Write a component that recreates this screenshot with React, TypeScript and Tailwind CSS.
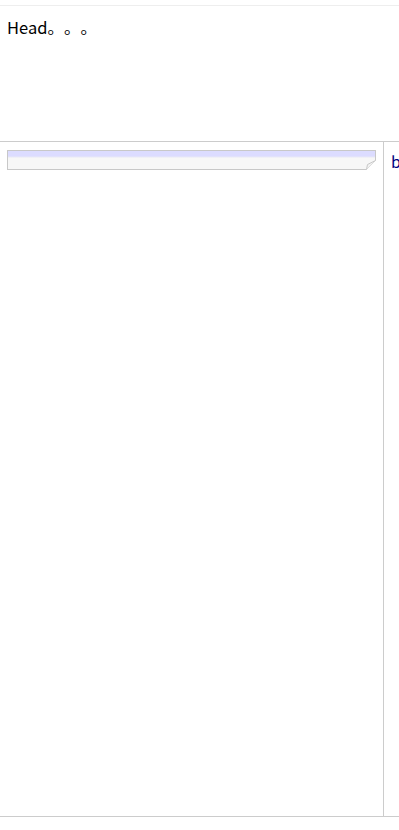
export default function App() {
  return (
    <div className="w-[399px] h-[830px] bg-white pt-[5px] font-['Noto_Sans_CJK_SC','Noto_Sans',sans-serif] text-black">
      <div className="h-[136px] border-t border-[#eeeeee] px-[7px] pt-[10px] text-[16.5px] leading-[22px] [text-spacing-trim:space-all]">
        Head。。。
      </div>
      <div className="flex h-[676px] border-y border-[#cccccc]">
        <div className="w-[384px] border-r border-[#cccccc] px-[7px] pt-[8px]">
          <div className="relative w-[369px] h-[20px]">
            <textarea
              rows={1}
              className="block w-full h-full resize-none border border-[#c8c8c8] bg-[linear-gradient(#dcdcff_0px,#dcdcff_5px,#e8e8f6_6px,#f7f7f7_7px)] outline-none"
            />
            {/* folded corner */}
            <svg className="absolute right-0 bottom-0" width="10" height="10" viewBox="0 0 10 10">
              <path d="M10 0 L10 10 L0 10 Z" fill="#ffffff" />
              <path d="M0.5 9.5 L9.5 0.5" stroke="#c8c8c8" strokeWidth="1" />
              <path d="M0.5 9.5 L1.5 4.5 L9.5 0.5" fill="#f2f2f2" stroke="#c8c8c8" strokeWidth="1" strokeLinejoin="round" />
            </svg>
          </div>
        </div>
        <div className="flex-1 px-[7px] pt-[8px] text-[16px] leading-[22px] text-[#000080]">b</div>
      </div>
    </div>
  )
}
